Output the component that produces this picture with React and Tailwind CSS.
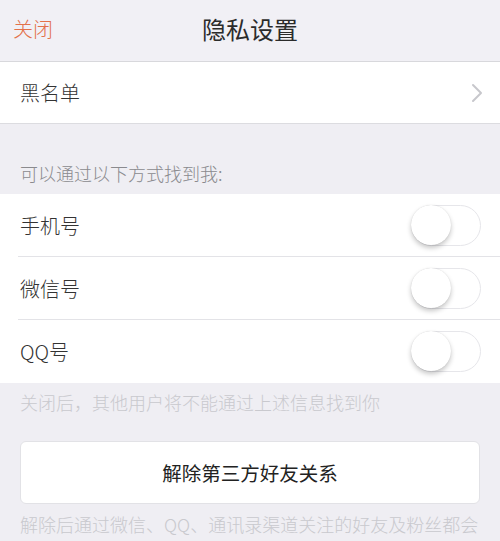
const Toggle = () => (
  <div className="relative w-[70px] h-[41px] rounded-full bg-white border-[1.5px] border-[#e6e6ea]">
    <div className="absolute left-[-1px] top-[-1px] w-[40px] h-[40px] rounded-full bg-white shadow-[0_3px_5px_rgba(0,0,0,0.22),0_0_1px_rgba(0,0,0,0.15)]" />
  </div>
);

const SwitchRow = ({ label, last }) => (
  <div className="flex h-[63px] items-center pl-5 relative">
    <span className="text-[20px] text-[#333]">{label}</span>
    <div className="ml-auto mr-[19px]">
      <Toggle />
    </div>
    {!last && <div className="absolute left-[18px] right-0 bottom-0 h-px bg-[#e3e3e7]" />}
  </div>
);

export default function App() {
  return (
    <div
      className="w-[500px] h-[541px] overflow-hidden bg-[#efeef3] font-light"
      style={{ fontFamily: '"Noto Sans CJK SC", "Noto Sans", sans-serif' }}
    >
      {/* Nav bar */}
      <div className="relative h-[62px] flex items-center justify-center border-b border-[#d8d8dc] bg-[#f1f0f5] pb-1">
        <span className="absolute left-[13px] text-[20px] text-[#e3714a]">关闭</span>
        <span className="text-[24px] text-[#2b2b2b] font-normal">隐私设置</span>
      </div>

      {/* Blacklist */}
      <div className="h-[62px] bg-white flex items-center pl-5 pr-[17px] border-b border-[#dcdce0]">
        <span className="text-[20px] text-[#333]">黑名单</span>
        <svg className="ml-auto" width="12" height="20" viewBox="0 0 12 20" fill="none">
          <path d="M2 2l8 8-8 8" stroke="#c7c7cc" strokeWidth="2" strokeLinecap="round" strokeLinejoin="round" />
        </svg>
      </div>

      {/* Section header */}
      <div className="h-[70px] flex items-end pl-5 pb-[7px]">
        <span className="text-[18px] text-[#8a8a8e]">可以通过以下方式找到我:</span>
      </div>

      <div className="bg-white">
        <SwitchRow label="手机号" />
        <SwitchRow label="微信号" />
        <SwitchRow label="QQ号" last />
      </div>

      <div className="pl-5 pt-[6px] h-[58px]">
        <span className="text-[18px] text-[#c9c9ce]">关闭后，其他用户将不能通过上述信息找到你</span>
      </div>

      <div className="mx-5 h-[63px] bg-white rounded-[6px] border border-[#e2e2e6] flex items-center justify-center">
        <span className="text-[19.5px] text-[#222] font-normal">解除第三方好友关系</span>
      </div>

      <div className="pl-5 pt-[7px]">
        <span className="text-[18px] text-[#c9c9ce] whitespace-nowrap">解除后通过微信、QQ、通讯录渠道关注的好友及粉丝都会</span>
      </div>
    </div>
  );
}
